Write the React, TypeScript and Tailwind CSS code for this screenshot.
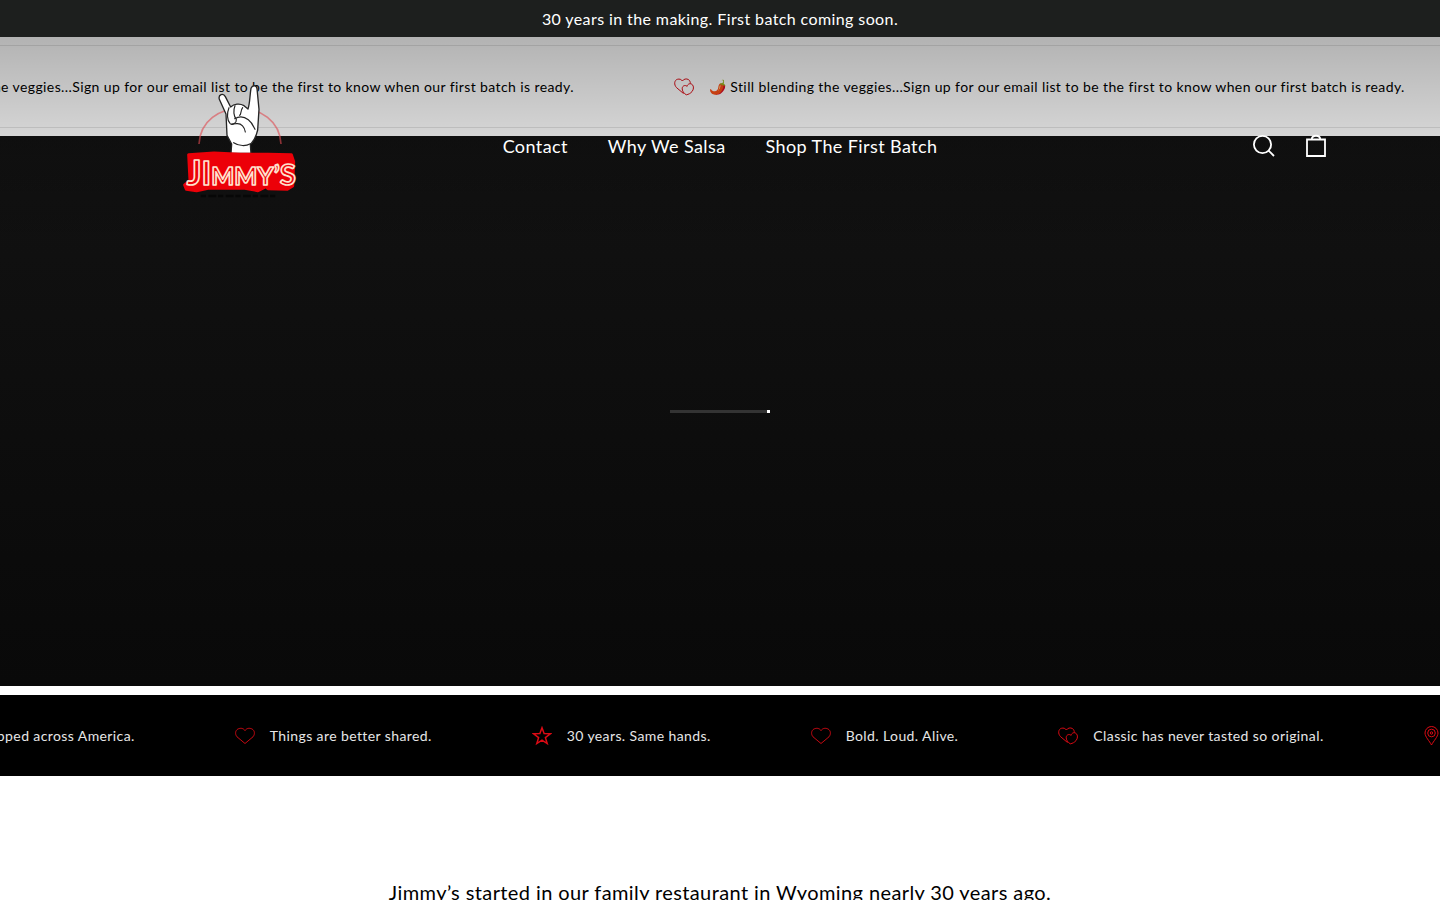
import React from "react";

type IconName = "heart" | "hearts" | "star" | "pin";

interface TickerItem {
  icon: IconName;
  text: string;
}

const navLinks = ["Contact", "Why We Salsa", "Shop The First Batch"];

const signupText =
  "🌶️ Still blending the veggies...Sign up for our email list to be the first to know when our first batch is ready.";

const signupItems: TickerItem[] = [
  { icon: "hearts", text: signupText },
  { icon: "hearts", text: signupText },
];

const valueItems: TickerItem[] = [
  { icon: "pin", text: "Shipped across America." },
  { icon: "heart", text: "Things are better shared." },
  { icon: "star", text: "30 years. Same hands." },
  { icon: "heart", text: "Bold. Loud. Alive." },
  { icon: "hearts", text: "Classic has never tasted so original." },
  { icon: "pin", text: "Shipped across America." },
];

const TickerIcon: React.FC<{ name: IconName }> = ({ name }) => (
  <svg
    viewBox="0 0 20 20"
    className="h-5 w-5 shrink-0"
    fill="none"
    stroke="currentColor"
    strokeWidth="1"
    strokeLinejoin="round"
    aria-hidden="true"
  >
    {name === "heart" && (
      <path
        strokeOpacity="0.9"
        d="M10 17.5 2 10.8C-.2 8.2.3 4.5 2.8 3.1 5.3 1.7 8.5 2.1 10 4.6c1.5-2.5 4.7-2.9 7.2-1.5 2.5 1.4 3 5.1.8 7.7z"
      />
    )}
    {name === "hearts" && (
      <>
        <path d="M9.6 16.6 2.5 10.6C-.3 7.6.3 3.2 3.4 2.3 5.4 1.7 7.500 2.400 8.400 4c1.200-2 4-2.700 6.100-1.400 1.200.8 1.900 2.300 1.800 3.900" />
        <path d="M12.3 17.8C9.7 16.4 8 13.8 8.2 11.2 8.5 8.6 11.4 7.7 13.1 9.4c.3-2.4 3.2-3.6 5.1-1.9 1.9 1.8 1.5 5-.2 7.1-1.4 1.7-3.4 2.8-5.7 3.2z" />
      </>
    )}
    {name === "star" && (
      <path
        strokeWidth="1.5"
        strokeLinejoin="miter"
        d="M10 1.8l2.1 5.8 6.3.2-5 3.8 1.8 6L10 14.2l-5.2 3.4 1.8-6-5-3.8 6.3-.2z"
      />
    )}
    {name === "pin" && (
      <>
        <path d="M7.5 19C5.5 15 1 10.8 1 7a6.5 6.5 0 0 1 13 0c0 3.8-4.500 8-6.500 12z" />
        <circle cx="7.5" cy="7" r="3.8" />
        <circle cx="7.5" cy="7" r="1.2" />
      </>
    )}
  </svg>
);

const Ticker: React.FC<{ items: TickerItem[] }> = ({ items }) => (
  <ul className="flex w-max items-center gap-[100px] whitespace-nowrap text-sm leading-[21px]">
    {items.map((item, i) => (
      <li key={i} className="flex items-center gap-[15px]">
        <span className="text-[#dc0a14]">
          <TickerIcon name={item.icon} />
        </span>
        {item.text}
      </li>
    ))}
  </ul>
);

const Logo: React.FC = () => (
  <svg
    viewBox="60 39 360 378"
    className="h-[126px] w-[120px]"
    role="img"
    aria-label="Jimmy's"
  >
    {/* Ring behind the hand */}
    <path
      d="M117 222C124 80 356 80 363 222"
      fill="none"
      stroke="#e04a50"
      strokeOpacity="0.6"
      strokeWidth="5"
    />
    {/* Horns */}
    <path
      d="M213 250 215 222 201 196 198 132 178 88C174 73 190 68 196 80L212 111C222 102 239 99 252 107L264 117C270 100 269 78 273 55 277 45 289 44 291 56L297 118 293 180C289 200 280 214 271 224L273 250z"
      fill="#fff"
      stroke="#252525"
      strokeWidth="4"
      strokeLinejoin="round"
    />
    <g
      fill="none"
      stroke="#252525"
      strokeWidth="3.5"
      strokeLinecap="round"
      strokeLinejoin="round"
    >
      <path d="M207 113C200 130 201 150 210 160 218 168 230 158 229 148 221 139 219 121 225 107" />
      <path d="M248 113C240 123 245 132 239 136" />
      <path d="M224 146C240 137 253 140 265 149 277 158 281 170 285 178" />
      <path d="M231 161C244 160 254 172 256 186M215 162 230 161" />
      <path d="M221 218C238 229 258 229 271 221" />
    </g>
    {/* Wordmark */}
    <path
      d="M86 254 162 249 240 253 324 253 394 254 401 275 398 348 382 358 324 356 318 350 294 362 250 354 144 355 110 362 79 358 74 345 90 332z"
      fill="#ec0008"
      stroke="#ec0008"
      strokeWidth="9"
      strokeLinejoin="round"
    />
    <text
      x="80"
      y="344"
      fontFamily="Lato, sans-serif"
      fontWeight="700"
      letterSpacing="0"
      fill="#ed0009"
      stroke="#ffe3cf"
      strokeWidth="5"
      strokeLinejoin="round"
    >
      <tspan fontSize="104">J</tspan>
      <tspan fontSize="98">I</tspan>
      <tspan fontSize="73">MM</tspan>
      <tspan fontSize="76">Y</tspan>
      <tspan fontSize="82">’</tspan>
      <tspan fontSize="88">S</tspan>
    </text>
    <path
      d="M122 378h230"
      stroke="#000"
      strokeOpacity="0.55"
      strokeWidth="8"
      strokeDasharray="16 7 24 5"
    />
  </svg>
);

const Header: React.FC = () => (
  <header className="absolute inset-x-0 top-0 z-10 grid h-[218px] grid-cols-[1fr_auto_1fr] items-center bg-linear-to-b from-black/30 to-transparent px-[110px] text-white">
    <a href="#" className="ml-[70px] justify-self-start">
      <Logo />
    </a>
    <nav className="flex gap-10 text-lg">
      {navLinks.map((label) => (
        <a key={label} href="#">
          {label}
        </a>
      ))}
    </nav>
    <div className="flex justify-end gap-6">
      <button type="button" aria-label="Search" className="cursor-pointer">
        <svg
          viewBox="0 0 28 28"
          className="h-7 w-7"
          fill="none"
          stroke="currentColor"
          strokeWidth="1.8"
        >
          <circle cx="12.5" cy="12.5" r="8.6" />
          <path d="M18.6 18.6 24 24" />
        </svg>
      </button>
      <button type="button" aria-label="Cart" className="cursor-pointer">
        <svg
          viewBox="0 0 28 28"
          className="h-7 w-7"
          fill="none"
          stroke="currentColor"
          strokeWidth="1.8"
        >
          <path d="M5 7.5h18v16.5H5z" />
          <path d="M9.8 7.5c0-5 8.4-5 8.4 0" />
        </svg>
      </button>
    </div>
  </header>
);

const App: React.FC = () => {
  return (
    <div className="overflow-hidden bg-white font-['Lato',sans-serif] tracking-wide text-black">
      <div className="bg-[#1d1f1e] py-2 text-center text-base leading-[21px] text-white">
        30 years in the making. First batch coming soon.
      </div>

      <div className="relative">
        <Header />

        <section className="py-2">
          <div className="border-y border-black/10 py-[30px]">
            <div className="-ml-[157px]">
              <Ticker items={signupItems} />
            </div>
          </div>
        </section>

        {/* Slideshow, still loading */}
        <section className="flex h-[550px] items-center justify-center bg-linear-to-b from-[#121212] to-[#090909]">
          <div className="flex h-[3px] w-[100px] justify-end bg-[#333]">
            <div className="w-[3px] bg-white" />
          </div>
        </section>
      </div>

      <section className="mt-[9px] bg-black py-[30px] text-[#e6e6e6]">
        <div className="-ml-[58px]">
          <Ticker items={valueItems} />
        </div>
      </section>

      <section className="px-10 pt-[100px] pb-10 text-center text-xl leading-8">
        <p>Jimmy’s started in our family restaurant in Wyoming nearly 30 years ago.</p>
      </section>
    </div>
  );
};

export default App;
